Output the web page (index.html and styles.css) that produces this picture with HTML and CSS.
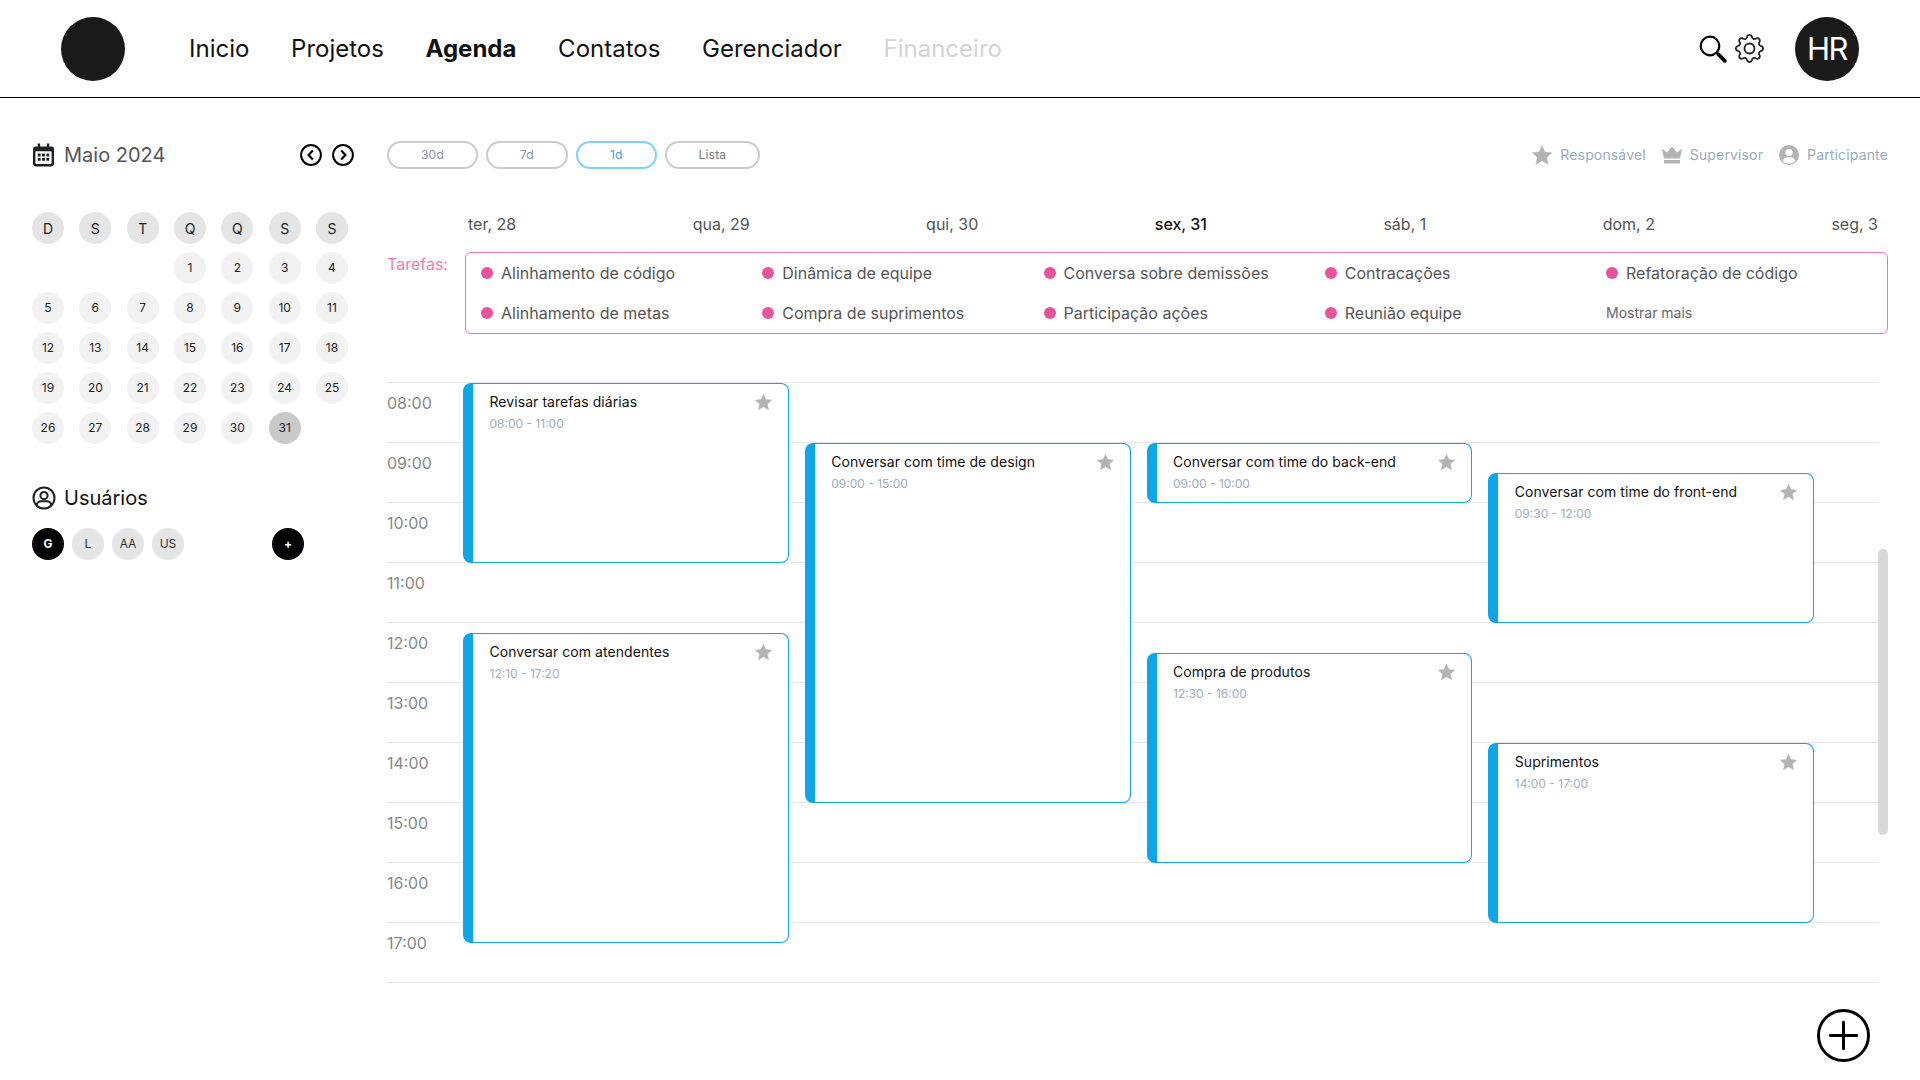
FILE: index.html
```html
<!DOCTYPE html>
<html lang="pt-BR">
<head>
<meta charset="utf-8">
<title>Agenda</title>
<link rel="stylesheet" href="styles.css">
</head>
<body>
<svg class="defs" width="0" height="0" aria-hidden="true">
  <symbol id="star" viewBox="0.6 0.9 18.800 17.900"><path d="M10 1.200l2.700 5.900 6.400.7-4.800 4.300 1.400 6.400L10 15.200l-5.700 3.300 1.400-6.400L.9 7.800l6.400-.7z" fill="currentColor" stroke="currentColor" stroke-width=".5" stroke-linejoin="round"/></symbol>
</svg>
<header class="topbar">
  <div class="logo"></div>
  <nav class="nav">
    <a class="nav-link">Inicio</a>
    <a class="nav-link">Projetos</a>
    <a class="nav-link nav-active">Agenda</a>
    <a class="nav-link">Contatos</a>
    <a class="nav-link">Gerenciador</a>
    <a class="nav-link nav-disabled">Financeiro</a>
  </nav>
  <div class="top-actions">
    <svg class="icon-search" viewBox="0 0 28 28"><circle cx="11" cy="11" r="9.300" fill="none" stroke="#000" stroke-width="2.200"/><path d="M17.800 17.800l2.200 2.200" stroke="#000" stroke-width="2" fill="none"/><path d="M19.500 19.500l6.300 6.300" stroke="#000" stroke-width="3.800" stroke-linecap="round" fill="none"/></svg>
    <svg class="icon-gear" viewBox="0 0 16 16" fill="#222"><path d="M8 4.754a3.246 3.246 0 1 0 0 6.492 3.246 3.246 0 0 0 0-6.492M5.754 8a2.246 2.246 0 1 1 4.492 0 2.246 2.246 0 0 1-4.492 0"/><path d="M9.796 1.343c-.527-1.790-3.065-1.790-3.592 0l-.094.319a.873.873 0 0 1-1.255.520l-.292-.160c-1.640-.892-3.433.902-2.540 2.541l.159.292a.873.873 0 0 1-.520 1.255l-.319.094c-1.790.527-1.790 3.065 0 3.592l.319.094a.873.873 0 0 1 .520 1.255l-.160.292c-.892 1.640.901 3.434 2.541 2.540l.292-.159a.873.873 0 0 1 1.255.520l.094.319c.527 1.790 3.065 1.790 3.592 0l.094-.319a.873.873 0 0 1 1.255-.520l.292.160c1.640.893 3.434-.902 2.540-2.541l-.159-.292a.873.873 0 0 1 .520-1.255l.319-.094c1.790-.527 1.790-3.065 0-3.592l-.319-.094a.873.873 0 0 1-.520-1.255l.160-.292c.893-1.640-.902-3.433-2.541-2.540l-.292.159a.873.873 0 0 1-1.255-.520zm-2.633.283c.246-.835 1.428-.835 1.674 0l.094.319a1.873 1.873 0 0 0 2.693 1.115l.291-.160c.764-.415 1.600.420 1.184 1.185l-.159.292a1.873 1.873 0 0 0 1.116 2.692l.318.094c.835.246.835 1.428 0 1.674l-.319.094a1.873 1.873 0 0 0-1.115 2.693l.160.291c.415.764-.420 1.600-1.185 1.184l-.291-.159a1.873 1.873 0 0 0-2.693 1.116l-.094.318c-.246.835-1.428.835-1.674 0l-.094-.319a1.873 1.873 0 0 0-2.692-1.115l-.292.160c-.764.415-1.600-.420-1.184-1.185l.159-.291A1.873 1.873 0 0 0 1.945 8.930l-.319-.094c-.835-.246-.835-1.428 0-1.674l.319-.094A1.873 1.873 0 0 0 3.060 4.377l-.160-.292c-.415-.764.420-1.600 1.185-1.184l.292.159a1.873 1.873 0 0 0 2.692-1.115z"/></svg>
    <div class="avatar">HR</div>
  </div>
</header>

<div class="layout">
  <aside class="sidebar">
    <div class="month-row">
      <svg class="icon-cal" viewBox="0 0 22 24"><path d="M5 0h2.500v3h7V0H17v3h2a3 3 0 0 1 3 3v15a3 3 0 0 1-3 3H3a3 3 0 0 1-3-3V6a3 3 0 0 1 3-3h2z" fill="#1c2126"/><rect x="2.500" y="8" width="17" height="13.500" rx="1" fill="#fff"/><g fill="#1c2126"><rect x="5" y="10.500" width="3" height="3"/><rect x="9.500" y="10.500" width="3" height="3"/><rect x="14" y="10.500" width="3" height="3"/><rect x="5" y="15" width="3" height="3"/><rect x="9.500" y="15" width="3" height="3"/><rect x="14" y="15" width="3" height="3"/></g></svg>
      <span class="month-label">Maio 2024</span>
      <div class="month-arrows">
        <svg class="icon-arrow" viewBox="0 0 22 22"><circle cx="11" cy="11" r="9.900" fill="none" stroke="#000" stroke-width="2"/><path d="M12.800 6.600L8.600 11l4.200 4.400" fill="none" stroke="#000" stroke-width="2.200"/></svg>
        <svg class="icon-arrow" viewBox="0 0 22 22"><circle cx="11" cy="11" r="9.900" fill="none" stroke="#000" stroke-width="2"/><path d="M9.200 6.600l4.200 4.400-4.200 4.400" fill="none" stroke="#000" stroke-width="2.200"/></svg>
      </div>
    </div>

    <div class="cal-grid">
      <span class="cal-head">D</span><span class="cal-head">S</span><span class="cal-head">T</span><span class="cal-head">Q</span><span class="cal-head">Q</span><span class="cal-head">S</span><span class="cal-head">S</span>
      <span></span><span></span><span></span>
      <span class="cal-day">1</span><span class="cal-day">2</span><span class="cal-day">3</span><span class="cal-day">4</span>
      <span class="cal-day">5</span><span class="cal-day">6</span><span class="cal-day">7</span><span class="cal-day">8</span><span class="cal-day">9</span><span class="cal-day">10</span><span class="cal-day">11</span>
      <span class="cal-day">12</span><span class="cal-day">13</span><span class="cal-day">14</span><span class="cal-day">15</span><span class="cal-day">16</span><span class="cal-day">17</span><span class="cal-day">18</span>
      <span class="cal-day">19</span><span class="cal-day">20</span><span class="cal-day">21</span><span class="cal-day">22</span><span class="cal-day">23</span><span class="cal-day">24</span><span class="cal-day">25</span>
      <span class="cal-day">26</span><span class="cal-day">27</span><span class="cal-day">28</span><span class="cal-day">29</span><span class="cal-day">30</span><span class="cal-day cal-today">31</span>
    </div>

    <div class="users-title">
      <svg class="icon-user" viewBox="0 0 24 24" fill="none" stroke="#1c2126" stroke-width="2"><circle cx="12" cy="12" r="10.500"/><circle cx="12" cy="9.500" r="3.600"/><path d="M4.600 19c.6-2.600 2.600-3.800 4.400-3.800h6c1.800 0 3.800 1.200 4.400 3.800"/></svg>
      <span>Usuários</span>
    </div>
    <div class="chips">
      <span class="chip chip-dark">G</span>
      <span class="chip">L</span>
      <span class="chip">AA</span>
      <span class="chip">US</span>
      <span class="chip chip-dark chip-add">+</span>
    </div>
  </aside>

  <main class="main">
    <div class="toolbar">
      <button class="tab">30d</button>
      <button class="tab">7d</button>
      <button class="tab tab-active">1d</button>
      <button class="tab tab-list">Lista</button>
      <div class="legend">
        <svg class="legend-icon"><use href="#star"/></svg>
        <span class="legend-text">Responsável</span>
        <svg class="legend-icon legend-gap" viewBox="0 0 20 20"><path d="M0 3.500l5 4L10 1.500l5 6 5-4-2 10H2z" fill="currentColor"/><rect x="2" y="15" width="16" height="3.500" fill="currentColor"/></svg>
        <span class="legend-text">Supervisor</span>
        <svg class="legend-icon legend-gap" viewBox="0 0 20 20"><circle cx="10" cy="10" r="10" fill="currentColor"/><circle cx="10" cy="7.500" r="3.600" fill="#fff"/><path d="M3.600 16.200c.8-3 3-4.200 6.400-4.200s5.600 1.200 6.400 4.200a9 9 0 0 1-12.800 0z" fill="#fff"/></svg>
        <span class="legend-text">Participante</span>
      </div>
    </div>

    <div class="days">
      <span>ter, 28</span><span>qua, 29</span><span>qui, 30</span><span class="day-current">sex, 31</span><span>sáb, 1</span><span>dom, 2</span><span>seg, 3</span>
    </div>

    <div class="tasks-row">
      <span class="tasks-label">Tarefas:</span>
      <div class="tasks-box">
        <span class="task">Alinhamento de código</span>
        <span class="task">Dinâmica de equipe</span>
        <span class="task">Conversa sobre demissões</span>
        <span class="task">Contracações</span>
        <span class="task">Refatoração de código</span>
        <span class="task">Alinhamento de metas</span>
        <span class="task">Compra de suprimentos</span>
        <span class="task">Participação ações</span>
        <span class="task">Reunião equipe</span>
        <span class="more">Mostrar mais</span>
      </div>
    </div>

    <div class="timeline">
      <div class="hour">08:00</div>
      <div class="hour">09:00</div>
      <div class="hour">10:00</div>
      <div class="hour">11:00</div>
      <div class="hour">12:00</div>
      <div class="hour">13:00</div>
      <div class="hour">14:00</div>
      <div class="hour">15:00</div>
      <div class="hour">16:00</div>
      <div class="hour">17:00</div>

      <div class="lanes">
        <div class="lane">
          <article class="event" style="top:0;height:180px">
            <h3 class="event-title">Revisar tarefas diárias</h3><p class="event-time">08:00 - 11:00</p>
            <svg class="event-star"><use href="#star"/></svg>
          </article>
          <article class="event" style="top:250px;height:310px">
            <h3 class="event-title">Conversar com atendentes</h3><p class="event-time">12:10 - 17:20</p>
            <svg class="event-star"><use href="#star"/></svg>
          </article>
        </div>
        <div class="lane">
          <article class="event" style="top:60px;height:360px">
            <h3 class="event-title">Conversar com time de design</h3><p class="event-time">09:00 - 15:00</p>
            <svg class="event-star"><use href="#star"/></svg>
          </article>
        </div>
        <div class="lane">
          <article class="event" style="top:60px;height:60px">
            <h3 class="event-title">Conversar com time do back-end</h3><p class="event-time">09:00 - 10:00</p>
            <svg class="event-star"><use href="#star"/></svg>
          </article>
          <article class="event" style="top:270px;height:210px">
            <h3 class="event-title">Compra de produtos</h3><p class="event-time">12:30 - 16:00</p>
            <svg class="event-star"><use href="#star"/></svg>
          </article>
        </div>
        <div class="lane">
          <article class="event" style="top:90px;height:150px">
            <h3 class="event-title">Conversar com time do front-end</h3><p class="event-time">09:30 - 12:00</p>
            <svg class="event-star"><use href="#star"/></svg>
          </article>
          <article class="event" style="top:360px;height:180px">
            <h3 class="event-title">Suprimentos</h3><p class="event-time">14:00 - 17:00</p>
            <svg class="event-star"><use href="#star"/></svg>
          </article>
        </div>
      </div>
      <div class="scroll-thumb"></div>
    </div>
  </main>
</div>

<svg class="fab" viewBox="0 0 54 54" fill="none" stroke="#000"><circle cx="27" cy="27" r="25.500" stroke-width="3"/><path d="M13.500 27h27M27 13.500v27" stroke-width="3" stroke-linecap="round"/></svg>
</body>
</html>
```
FILE: styles.css
```css
* { box-sizing: border-box; }
html, body { margin: 0; height: 100%; }
body {
  position: relative;
  width: 1920px;
  height: 1080px;
  overflow: hidden;
  background: #fff;
  color: #111;
  font-family: Inter, "Liberation Sans", sans-serif;
}
.defs { position: absolute; }

/* Header */
.topbar {
  display: flex;
  align-items: center;
  height: 98px;
  padding: 0 61px;
  border-bottom: 1px solid #000;
}
.logo { width: 64px; height: 64px; border-radius: 50%; background: #1a1a1a; }
.nav { display: flex; gap: 41.700px; margin-left: 64px; }
.nav-link { font-size: 24px; line-height: 32px; color: #111; }
.nav-active { font-weight: 700; }
.nav-disabled { color: #d4d4d4; }
.top-actions { display: flex; align-items: center; margin-left: auto; }
.icon-search { width: 28px; height: 28px; }
.icon-gear { width: 29px; height: 29px; margin-left: 8px; }
.avatar {
  display: flex;
  align-items: center;
  justify-content: center;
  width: 64px;
  height: 64px;
  margin-left: 31px;
  border-radius: 50%;
  background: #1a1a1a;
  color: #fff;
  font-size: 31px;
  letter-spacing: -1.500px;
}

.layout { display: flex; }

/* Sidebar */
.sidebar { width: 387px; padding: 43px 0 0 32px; flex: none; }
.month-row { display: flex; align-items: center; height: 28px; width: 322px; }
.icon-cal { width: 21px; height: 24px; margin-left: 1px; }
.month-label { margin-left: 10px; font-size: 20px; color: #555; }
.month-arrows { display: flex; gap: 10px; margin-left: auto; }
.icon-arrow { width: 22px; height: 22px; display: block; }

.cal-grid {
  display: grid;
  grid-template-columns: repeat(7, 32px);
  justify-content: space-between;
  row-gap: 8px;
  width: 316px;
  margin-top: 43px;
}
.cal-head, .cal-day {
  display: flex;
  align-items: center;
  justify-content: center;
  width: 32px;
  height: 32px;
  border-radius: 50%;
  color: #222;
}
.cal-head { background: #e5e5e5; font-size: 14px; }
.cal-day { background: #f2f2f2; font-size: 12px; padding-bottom: 1px; }
.cal-today { background: #c9c9c9; }

.users-title {
  display: flex;
  align-items: center;
  gap: 8px;
  height: 24px;
  margin-top: 42px;
  font-size: 20px;
  color: #111;
}
.icon-user { width: 24px; height: 24px; }
.chips { display: flex; gap: 8px; width: 272px; margin-top: 18px; }
.chip {
  display: flex;
  align-items: center;
  justify-content: center;
  width: 32px;
  height: 32px;
  padding-bottom: 1px;
  border-radius: 50%;
  background: #e5e5e5;
  color: #333;
  font-size: 12px;
}
.chip-dark { background: #000; color: #fff; font-weight: 700; }
.chip-add { margin-left: auto; }

/* Main */
.main { flex: 1; min-width: 0; padding: 43px 32px 0 0; }
.toolbar { display: flex; align-items: center; gap: 8px; height: 28px; }
.tab {
  height: 28px;
  padding: 0 32px 2px;
  border: 2px solid #ccc;
  border-radius: 14px;
  background: #fff;
  color: #8c93a0;
  font: 12px Inter, "Liberation Sans", sans-serif;
  letter-spacing: .200px;
}
.tab-active { border-color: #7dd3fc; color: #3b9fe6; }
.tab-list { color: #777; }
.legend { display: flex; align-items: center; margin-left: auto; }
.legend-icon { width: 20px; height: 20px; color: #b3b3b3; }
.legend-gap { margin-left: 16px; }
.legend-text { margin-left: 8px; padding-bottom: 2px; font-size: 14px; letter-spacing: .150px; color: #9aa9c4; }

.days {
  display: flex;
  justify-content: space-between;
  height: 24px;
  margin-top: 43px;
  padding: 0 10px 0 81px;
  font-size: 16px;
  line-height: 24px;
  color: #555;
}
.day-current { color: #111; font-weight: 500; }

.tasks-row { display: flex; margin-top: 16px; }
.tasks-label { width: 78px; flex: none; font-size: 16px; line-height: 24px; color: #ee7eb2; }
.tasks-box {
  display: grid;
  grid-template-columns: repeat(5, 281.250px);
  align-content: start;
  row-gap: 16px;
  width: 1423px;
  height: 82px;
  padding: 8px 0 0 15px;
  border: 1px solid #f472b6;
  border-radius: 6px;
}
.task {
  display: flex;
  align-items: center;
  gap: 8px;
  height: 24px;
  font-size: 16px;
  color: #555;
}
.task::before {
  content: "";
  width: 12px;
  height: 12px;
  border-radius: 50%;
  background: #e8549b;
}
.more { font-size: 14px; line-height: 24px; color: #666; }

/* Timeline */
.timeline {
  position: relative;
  margin: 48px 10px 0 0;
  border-bottom: 1px solid #e5e5e5;
}
.hour {
  height: 60px;
  padding-top: 8px;
  border-top: 1px solid #e5e5e5;
  font-size: 16px;
  line-height: 24px;
  color: #888;
}
.lanes {
  position: absolute;
  top: 1px;
  left: 76px;
  display: grid;
  grid-template-columns: repeat(4, 1fr);
  gap: 16px;
  width: 1351px;
  height: 600px;
}
.lane { position: relative; }
.event {
  position: absolute;
  left: 0;
  right: 0;
  padding: 8px 16.500px;
  border: 1px solid #0ea5e9;
  border-left-width: 10px;
  border-radius: 8px;
  background: #fff;
}
.event-title { margin: 0; font-size: 14px; font-weight: 400; line-height: 20px; letter-spacing: .060px; color: #111; }
.event-time { margin: 4px 0 0; font-size: 12px; line-height: 16px; color: #a0aec0; }
.event-star {
  position: absolute;
  top: 10px;
  right: 16px;
  width: 17px;
  height: 16px;
  color: #b3b3b3;
}
.scroll-thumb {
  position: absolute;
  top: 167px;
  right: -10px;
  width: 10px;
  height: 286px;
  border-radius: 5px;
  background: #d9d9d9;
}
.fab {
  position: absolute;
  left: 1817px;
  top: 1009px;
  width: 53px;
  height: 53px;
}
```
